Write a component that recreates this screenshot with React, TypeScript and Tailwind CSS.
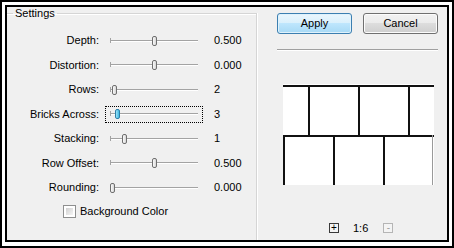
import React from "react";

const rows = [
  { label: "Depth:", value: "0.500", thumb: 44, h: "h-[25px]" },
  { label: "Distortion:", value: "0.000", thumb: 44, h: "h-[24px]" },
  { label: "Rows:", value: "2", thumb: 4, h: "h-[25px]" },
  { label: "Bricks Across:", value: "3", thumb: 7, h: "h-[24px]", focus: true },
  { label: "Stacking:", value: "1", thumb: 14, h: "h-[25px]" },
  { label: "Row Offset:", value: "0.500", thumb: 44, h: "h-[24px]" },
  { label: "Rounding:", value: "0.000", thumb: 2, h: "h-[25px]" },
];

function Slider({ thumb, focus }: { thumb: number; focus?: boolean }) {
  return (
    <div
      className={
        "ml-[6px] w-[98px] h-[17px] px-[4px] flex items-center border " +
        (focus ? "border-dotted border-black" : "border-transparent")
      }
    >
      <div className="relative w-full h-[2px] bg-[#a3a3a3] border-b border-white">
        <div className="absolute left-0 top-[-2px] w-px h-[5px] bg-[#a3a3a3]" />
        <div
          className={
            "absolute top-[-4px] w-[5px] h-[10px] rounded-[2px] border " +
            (focus
              ? "border-[#2c7fa8] bg-[linear-gradient(to_right,#9fe3f7,#3fb9e3)]"
              : "border-[#6f6f6f] bg-[linear-gradient(to_right,#fbfbfb,#d6d6d6)]")
          }
          style={{ left: thumb - 2 }}
        />
      </div>
    </div>
  );
}

function Bricks() {
  const v = [
    [25, 1, 51],
    [75, 1, 51],
    [125, 1, 51],
    [0, 51, 50],
    [50, 51, 50],
    [100, 51, 50],
  ];
  return (
    <svg width="152" height="102" className="block" shapeRendering="crispEdges">
      <rect x="0" y="0" width="151" height="101" fill="#fff" />
      <rect x="0" y="1" width="151" height="2" fill="#111" />
      <rect x="0" y="51" width="151" height="2" fill="#111" />
      {v.map(([x, y, h], i) => (
        <rect key={i} x={x} y={y} width="2" height={h} fill="#111" />
      ))}
      <rect x="149" y="51" width="1" height="50" fill="#9a9a9a" />
    </svg>
  );
}

export default function App() {
  return (
    <div className="w-[454px] h-[248px] border-2 border-black bg-white pt-[3px] pl-[3px] pr-[3px] pb-[4px] font-['Liberation_Sans',Arial,sans-serif] text-[11px] text-black">
      <div className="w-full h-full border-2 border-black bg-[#f0f0f0] flex">
        <fieldset className="w-[250px] h-full border-t border-r border-[#d5d5d5] shadow-[1px_0_0_#fff,inset_0_1px_0_#fff]">
          <legend className="ml-[6px] px-[2px] leading-[13px]">Settings</legend>
          <div className="pt-[8px]">
            {rows.map((r) => (
              <div key={r.label} className={"flex items-center " + r.h}>
                <div className="w-[92px] text-right">{r.label}</div>
                <Slider thumb={r.thumb} focus={r.focus} />
                <div className="ml-[11px]">{r.value}</div>
              </div>
            ))}
            <div className="flex items-center h-[22px] pl-[56px]">
              <div className="w-[13px] h-[13px] border border-[#8e8f8f] bg-white p-[2px]">
                <div className="w-full h-full bg-[linear-gradient(135deg,#d0d0d0,#f5f5f5)]" />
              </div>
              <span className="ml-[4px]">Background Color</span>
            </div>
          </div>
        </fieldset>
        <div className="flex-1 flex flex-col pl-[20px] pt-[6px]">
          <div className="flex gap-[11px]">
            <button className="w-[75px] h-[21px] rounded-[3px] border border-[#3c7fb1] bg-[linear-gradient(to_bottom,#eaf6fd_0%,#d9f0fc_50%,#bee6fd_50%,#a7d9f5_100%)] shadow-[inset_0_0_0_1px_#dff2fc]">
              Apply
            </button>
            <button className="w-[75px] h-[21px] rounded-[3px] border border-[#707070] bg-[linear-gradient(to_bottom,#f2f2f2_0%,#ebebeb_50%,#dddddd_50%,#cfcfcf_100%)] shadow-[inset_0_0_0_1px_#fcfcfc]">
              Cancel
            </button>
          </div>
          <div className="mt-[15px] w-[161px] h-[2px] bg-[#a0a0a0] border-b border-white" />
          <div className="mt-[33px] ml-[6px]">
            <Bricks />
          </div>
          <div className="mt-[34px] ml-[52px] flex items-center">
            <div className="w-[10px] h-[10px] border border-[#3a3a3a] bg-[#f4f4f4] flex items-center justify-center text-[10px] leading-none">
              +
            </div>
            <span className="ml-[14px]">1:6</span>
            <div className="ml-[15px] w-[10px] h-[10px] border border-[#b5b5b5] bg-[#f4f4f4] flex items-center justify-center text-[10px] leading-none text-[#a0a0a0]">
              -
            </div>
          </div>
        </div>
      </div>
    </div>
  );
}
